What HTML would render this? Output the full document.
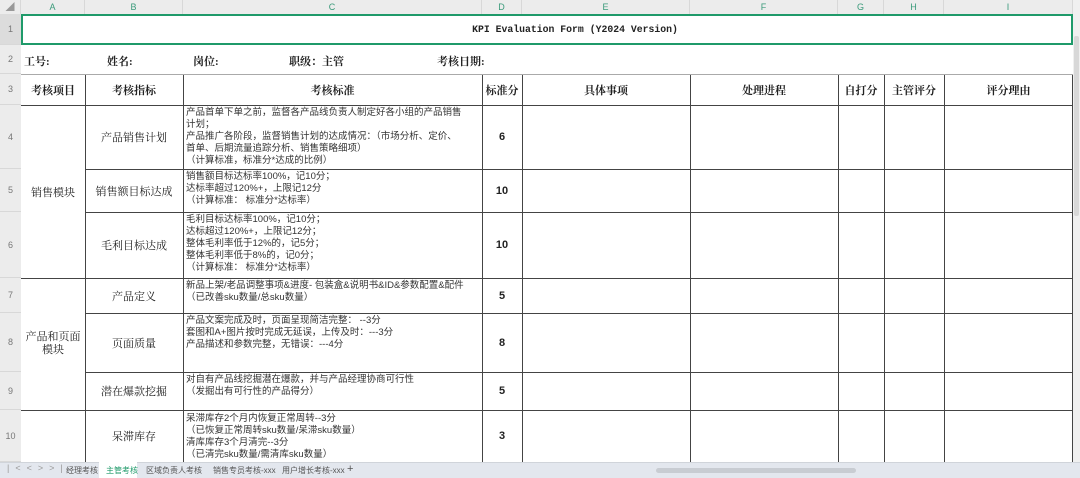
<!DOCTYPE html>
<html><head><meta charset="utf-8"><style>
*{margin:0;padding:0;box-sizing:border-box}
body{width:1080px;height:478px;overflow:hidden;background:#fff;position:relative;font-family:"Liberation Sans","Noto Sans CJK SC",sans-serif;color:#222}
.a{position:absolute}
.ch{top:0;height:14px;background:#ececec;font-size:9px;color:#3a9a7a;text-align:center;line-height:14px;border-right:1px solid #d8d8d8}
.rh{left:0;width:21px;background:#ececec;font-size:9px;color:#777;text-align:center;border-bottom:1px solid #d8d8d8;display:flex;align-items:center;justify-content:center}
.v{width:1px;background:#444}
.h{height:1px;background:#444}
.c{display:flex;align-items:center;justify-content:center;text-align:center}
.s{font-family:"Liberation Serif","Noto Serif CJK SC",serif}
.hd{font-family:"Liberation Serif","Noto Serif CJK SC",serif;font-weight:bold;font-size:11px}
.t{font-size:9.5px;line-height:12px;padding-left:3px;padding-top:2px;white-space:nowrap;color:#333}
.n{font-weight:bold;font-size:11px}
</style></head><body>
<div class="a ch" style="left:0;width:21px;color:#999">◢</div>
<div class="a ch" style="left:21px;width:64px">A</div>
<div class="a ch" style="left:85px;width:98px">B</div>
<div class="a ch" style="left:183px;width:299px">C</div>
<div class="a ch" style="left:482px;width:40px">D</div>
<div class="a ch" style="left:522px;width:168px">E</div>
<div class="a ch" style="left:690px;width:148px">F</div>
<div class="a ch" style="left:838px;width:46px">G</div>
<div class="a ch" style="left:884px;width:60px">H</div>
<div class="a ch" style="left:944px;width:129px">I</div>
<div class="a" style="left:1073px;top:0;width:7px;height:462px;background:#f0f0f0"></div>
<div class="a" style="left:1074px;top:36px;width:5px;height:180px;background:#d8d8d8;border-radius:2px"></div>
<div class="a rh" style="top:14px;height:31px;background:#dcdcdc">1</div>
<div class="a rh" style="top:45px;height:29px">2</div>
<div class="a rh" style="top:74px;height:31px">3</div>
<div class="a rh" style="top:105px;height:64px">4</div>
<div class="a rh" style="top:169px;height:43px">5</div>
<div class="a rh" style="top:212px;height:66px">6</div>
<div class="a rh" style="top:278px;height:35px">7</div>
<div class="a rh" style="top:313px;height:59px">8</div>
<div class="a rh" style="top:372px;height:38px">9</div>
<div class="a rh" style="top:410px;height:52px">10</div>
<div class="a" style="left:21px;top:14px;width:1052px;height:31px;border:2px solid #1f9a6a"></div>
<div class="a c" style="left:21px;top:14px;width:1052px;height:31px;font-family:'Liberation Mono','Noto Sans CJK SC',monospace;font-weight:bold;font-size:9.8px;padding-left:56px">KPI Evaluation Form (Y2024 Version)</div>
<div class="a hd" style="left:24px;top:53px">工号:</div>
<div class="a hd" style="left:107px;top:53px">姓名:</div>
<div class="a hd" style="left:193px;top:53px">岗位:</div>
<div class="a hd" style="left:289px;top:53px">职级：主管</div>
<div class="a hd" style="left:437px;top:53px">考核日期:</div>
<div class="a" style="left:21px;top:74px;width:1052px;height:1px;background:#aaa"></div>
<div class="a h" style="left:21px;top:105px;width:1052px"></div>
<div class="a h" style="left:85px;top:169px;width:988px"></div>
<div class="a h" style="left:85px;top:212px;width:988px"></div>
<div class="a h" style="left:21px;top:278px;width:1052px"></div>
<div class="a h" style="left:85px;top:313px;width:988px"></div>
<div class="a h" style="left:85px;top:372px;width:988px"></div>
<div class="a h" style="left:21px;top:410px;width:1052px"></div>
<div class="a v" style="left:85px;top:75px;height:387px"></div>
<div class="a v" style="left:183px;top:75px;height:387px"></div>
<div class="a v" style="left:482px;top:75px;height:387px"></div>
<div class="a v" style="left:522px;top:75px;height:387px"></div>
<div class="a v" style="left:690px;top:75px;height:387px"></div>
<div class="a v" style="left:838px;top:75px;height:387px"></div>
<div class="a v" style="left:884px;top:75px;height:387px"></div>
<div class="a v" style="left:944px;top:75px;height:387px"></div>
<div class="a v" style="left:1072px;top:75px;height:387px"></div>
<div class="a c hd" style="left:21px;top:75px;width:64px;height:30px">考核项目</div>
<div class="a c hd" style="left:85px;top:75px;width:98px;height:30px">考核指标</div>
<div class="a c hd" style="left:183px;top:75px;width:299px;height:30px">考核标准</div>
<div class="a c hd" style="left:482px;top:75px;width:40px;height:30px">标准分</div>
<div class="a c hd" style="left:522px;top:75px;width:168px;height:30px">具体事项</div>
<div class="a c hd" style="left:690px;top:75px;width:148px;height:30px">处理进程</div>
<div class="a c hd" style="left:838px;top:75px;width:46px;height:30px">自打分</div>
<div class="a c hd" style="left:884px;top:75px;width:60px;height:30px">主管评分</div>
<div class="a c hd" style="left:944px;top:75px;width:129px;height:30px">评分理由</div>
<div class="a c s" style="left:21px;top:105px;width:64px;height:173px;font-size:11px">销售模块</div>
<div class="a c s" style="left:21px;top:278px;width:64px;height:132px;font-size:11px;line-height:13px">产品和页面<br>模块</div>
<div class="a c s" style="left:85px;top:105px;width:98px;height:64px;font-size:11px">产品销售计划</div>
<div class="a c s" style="left:85px;top:169px;width:98px;height:43px;font-size:11px">销售额目标达成</div>
<div class="a c s" style="left:85px;top:212px;width:98px;height:66px;font-size:11px">毛利目标达成</div>
<div class="a c s" style="left:85px;top:278px;width:98px;height:35px;font-size:11px">产品定义</div>
<div class="a c s" style="left:85px;top:313px;width:98px;height:59px;font-size:11px">页面质量</div>
<div class="a c s" style="left:85px;top:372px;width:98px;height:38px;font-size:11px">潜在爆款挖掘</div>
<div class="a c s" style="left:85px;top:410px;width:98px;height:52px;font-size:11px">呆滞库存</div>
<div class="a t" style="left:183px;top:105px">产品首单下单之前，监督各产品线负责人制定好各小组的产品销售<br>计划；<br>产品推广各阶段，监督销售计划的达成情况：（市场分析、定价、<br>首单、后期流量追踪分析、销售策略细项）<br>（计算标准，标准分*达成的比例）</div>
<div class="a t" style="left:183px;top:169px">销售额目标达标率100%，记10分；<br>达标率超过120%+，上限记12分<br>（计算标准：  标准分*达标率）</div>
<div class="a t" style="left:183px;top:212px">毛利目标达标率100%，记10分；<br>达标超过120%+，上限记12分；<br>整体毛利率低于12%的，记5分；<br>整体毛利率低于8%的，记0分；<br>（计算标准：  标准分*达标率）</div>
<div class="a t" style="left:183px;top:278px">新品上架/老品调整事项&amp;进度- 包装盒&amp;说明书&amp;ID&amp;参数配置&amp;配件<br>（已改善sku数量/总sku数量）</div>
<div class="a t" style="left:183px;top:313px">产品文案完成及时，页面呈现简洁完整：  --3分<br>套图和A+图片按时完成无延误，上传及时：---3分<br>产品描述和参数完整，无错误：---4分</div>
<div class="a t" style="left:183px;top:372px">对自有产品线挖掘潜在爆款，并与产品经理协商可行性<br>（发掘出有可行性的产品得分）</div>
<div class="a t" style="left:183px;top:411px">呆滞库存2个月内恢复正常周转--3分<br>（已恢复正常周转sku数量/呆滞sku数量）<br>清库库存3个月清完--3分<br>（已清完sku数量/需清库sku数量）</div>
<div class="a c n" style="left:482px;top:105px;width:40px;height:64px">6</div>
<div class="a c n" style="left:482px;top:169px;width:40px;height:43px">10</div>
<div class="a c n" style="left:482px;top:212px;width:40px;height:66px">10</div>
<div class="a c n" style="left:482px;top:278px;width:40px;height:35px">5</div>
<div class="a c n" style="left:482px;top:313px;width:40px;height:59px">8</div>
<div class="a c n" style="left:482px;top:372px;width:40px;height:38px">5</div>
<div class="a c n" style="left:482px;top:410px;width:40px;height:52px">3</div>
<div class="a" style="left:0;top:462px;width:1080px;height:16px;background:#e3e7ee;border-top:1px solid #d0d4da"></div>
<div class="a" style="left:7px;top:463px;font-size:9px;color:#999;letter-spacing:6px">|&lt;&lt;&gt;&gt;|</div>
<div class="a" style="left:66px;top:465px;font-size:8px;color:#555">经理考核</div>
<div class="a" style="left:99px;top:462px;width:38px;height:16px;background:#fff"></div>
<div class="a" style="left:106px;top:465px;font-size:8px;color:#1f9a6a">主管考核</div>
<div class="a" style="left:146px;top:465px;font-size:8px;color:#555">区域负责人考核</div>
<div class="a" style="left:213px;top:465px;font-size:8px;color:#555">销售专员考核-xxx</div>
<div class="a" style="left:282px;top:465px;font-size:8px;color:#555">用户增长考核-xxx</div>
<div class="a" style="left:347px;top:463px;font-size:11px;color:#555">+</div>
<div class="a" style="left:656px;top:468px;width:200px;height:5px;background:#c8ccd2;border-radius:3px"></div>
</body></html>
